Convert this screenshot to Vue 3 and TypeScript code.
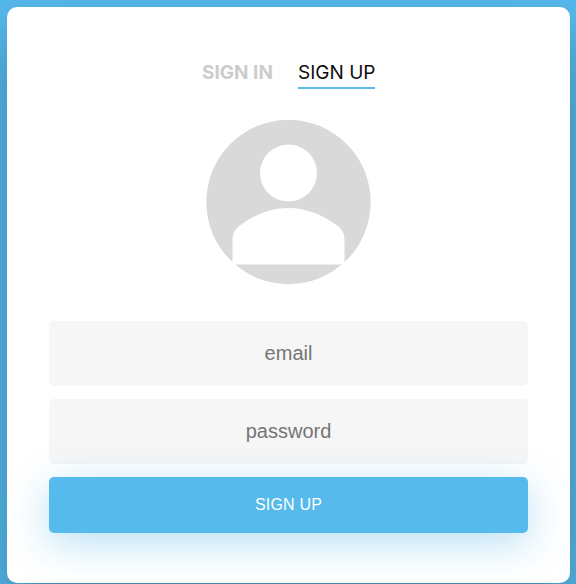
<script setup lang="ts">
const email = 'email'
const password = 'password'
</script>

<template>
  <div class="page">
    <main class="card">
      <nav class="tabs">
        <span class="tab inactive">SIGN IN</span>
        <span class="tab active">SIGN UP</span>
      </nav>
      <svg class="avatar" width="165" height="165" viewBox="0 0 165 165" aria-hidden="true">
        <circle cx="82.5" cy="82" r="82.2" fill="#d9d9d9" />
        <circle cx="82.5" cy="53" r="28.5" fill="#fff" />
        <path d="M26.500 144.500 V120 C26.500 112 30 108 36 104 C50 94 66 88 82.500 88 C99 88 115 94 129 104 C135 108 138.500 112 138.500 120 V144.500 Z" fill="#fff" />
      </svg>
      <form class="form" @submit.prevent>
        <input class="field" type="text" :placeholder="email" />
        <input class="field" type="password" :placeholder="password" />
        <button class="submit" type="submit">SIGN UP</button>
      </form>
    </main>
  </div>
</template>

<style scoped>
.page {
  box-sizing: border-box;
  width: 576px;
  height: 584px;
  padding: 7px 6px 1px 7px;
  background: #56baed;
  overflow: hidden;
}
.card {
  box-sizing: border-box;
  width: 563px;
  height: 576px;
  background: #fff;
  border-radius: 10px;
  box-shadow: 0 30px 60px rgba(0, 0, 0, 0.3);
  display: flex;
  flex-direction: column;
  align-items: center;
  padding-top: 52px;
}
.tabs {
  display: flex;
  gap: 25px;
  height: 30px;
}
.tab {
  box-sizing: border-box;
  height: 30px;
  font-family: Inter, sans-serif;
  font-size: 19px;
  line-height: 28px;
  font-weight: 400;
}
.inactive {
  color: #cccccc;
  font-weight: 700;
  width: 71px;
  white-space: nowrap;
  text-align: center;
}
.active {
  color: #0d0d0d;
  width: 77px;
  white-space: nowrap;
  text-align: center;
  border-bottom: 2px solid #56baed;
}
.avatar {
  display: block;
  margin-top: 31px;
}
.form {
  width: 479px;
  display: flex;
  flex-direction: column;
  margin-top: 36px;
  gap: 13px;
}
.field {
  box-sizing: border-box;
  width: 100%;
  height: 65px;
  border: 2px solid #f6f6f6;
  border-radius: 5px;
  background: #f6f6f6;
  outline: none;
  text-align: center;
  font-family: "Liberation Sans", Arial, sans-serif;
  font-size: 20px;
  color: #0d0d0d;
}
.field::placeholder {
  color: #757575;
  opacity: 1;
}
.submit {
  height: 56px;
  border: none;
  border-radius: 5px;
  background: #56baed;
  color: #fff;
  font-family: "Liberation Sans", Arial, sans-serif;
  font-size: 16px;
  letter-spacing: 0.2px;
  box-shadow: 0 10px 40px rgba(95, 186, 233, 0.45);
}
</style>
